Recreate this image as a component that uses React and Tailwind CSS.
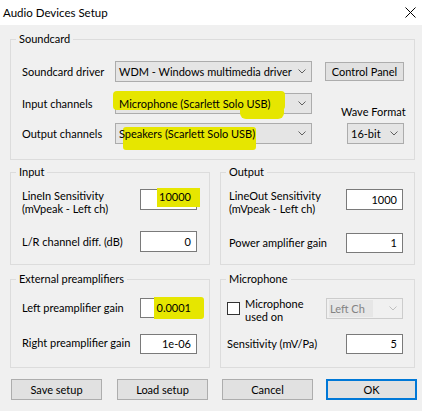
import React from 'react'

const Chevron = ({ color = '#606060' }) => (
  <svg width="8" height="5" viewBox="0 0 8 5" className="shrink-0">
    <path d="M0.5 0.5 L4 4 L7.5 0.5" fill="none" stroke={color} strokeWidth="1" />
  </svg>
)

function Combo({ w, children, disabled }) {
  return (
    <div
      className={`h-[21px] ${w} flex items-center justify-between pl-[3px] pr-[5px] border ${
        disabled ? 'border-[#cccccc] bg-[#f0f0f0] text-[#838383]' : 'border-[#acacac] bg-[#e5e5e5]'
      }`}
    >
      <div className="whitespace-nowrap">{children}</div>
      <Chevron color={disabled ? '#bfbfbf' : '#606060'} />
    </div>
  )
}

function Field({ children, h = 'h-[21px]' }) {
  return (
    <div className={`${h} w-[57px] shrink-0 border border-[#7a7a7a] bg-white flex items-center justify-end pr-[5px]`}>
      {children}
    </div>
  )
}

function Group({ title, className, children }) {
  return (
    <fieldset className={`border border-[#dcdcdc] ${className}`}>
      <legend className="ml-[5px] px-[3px] leading-[16px]">{title}</legend>
      {children}
    </fieldset>
  )
}

function Btn({ children, primary, className = '' }) {
  return (
    <button
      className={`h-[21px] w-[91px] bg-[#e1e1e1] flex items-center justify-center ${
        primary ? 'border-2 border-[#0078d7]' : 'border border-[#adadad]'
      } ${className}`}
    >
      {children}
    </button>
  )
}

export default function App() {
  return (
    <div className="w-[422px] h-[411px] overflow-hidden bg-[#f0f0f0] text-[11px] leading-[16px] text-black font-['Lato',sans-serif]">
      {/* title bar */}
      <div className="h-[25px] bg-white flex items-center justify-between pl-[3px] pr-[6px]">
        <span className="text-[11.5px]">Audio Devices Setup</span>
        <svg width="11" height="11" viewBox="0 0 11 11">
          <path d="M0.5 0.5 L10.5 10.5 M10.5 0.5 L0.5 10.5" stroke="#000" strokeWidth="1" />
        </svg>
      </div>

      <div className="pl-[10px] pt-[6px]">
        <Group title="Soundcard" className="w-[405px] h-[129px]">
          <div className="flex pt-[14px]">
            <div className="flex flex-col pl-[11px]">
              <div className="flex items-center h-[21px]">
                <span className="w-[93px]">Soundcard driver</span>
                <Combo w="w-[197px]">WDM - Windows multimedia driver</Combo>
              </div>
              <div className="flex items-center h-[21px] mt-[11px]">
                <span className="w-[93px]">Input channels</span>
                <Combo w="w-[197px]">
                  <span className="relative block">
                    {/* marker strokes */}
                    <span className="absolute -left-[6px] -top-[5px] w-[172px] h-[19px] bg-[#e6e600] rounded-[4px]" />
                    <span className="absolute left-[121px] top-[8px] w-[44px] h-[15px] bg-[#e6e600] rounded-[6px]" />
                    <span className="relative">Microphone (Scarlett Solo USB)</span>
                  </span>
                </Combo>
              </div>
              <div className="flex items-center h-[21px] mt-[9px]">
                <span className="w-[93px]">Output channels</span>
                <Combo w="w-[197px]">
                  <span className="relative block">
                    <span className="absolute left-[4px] top-[1px] w-[133px] h-[23px] bg-[#e6e600] rounded-[3px]" />
                    <span className="relative">Speakers (Scarlett Solo USB)</span>
                  </span>
                </Combo>
              </div>
            </div>
            <div className="flex flex-col ml-[13px]">
              <button className="mt-[1px] h-[19px] w-[79px] bg-[#e1e1e1] border border-[#adadad] flex items-center justify-center">
                Control Panel
              </button>
              <span className="mt-[23px] ml-[16px] whitespace-nowrap">Wave Format</span>
              <div className="mt-[3px] ml-[22px]">
                <Combo w="w-[57px]">16-bit</Combo>
              </div>
            </div>
          </div>
        </Group>

        <div className="flex mt-[4px]">
          <Group title="Input" className="w-[200px] h-[101px]">
            <div className="pt-[9px] pl-[11px]">
              <div className="flex items-start">
                <span className="w-[118px] leading-[13px]">
                  LineIn Sensitivity
                  <br />
                  (mVpeak - Left ch)
                </span>
                <Field>
                  <span className="bg-[#e6e600] pl-[2px] pr-[9px] -mr-[9px] pt-[1px] pb-[2px] -mt-[4px]">10000</span>
                </Field>
              </div>
              <div className="flex items-center mt-[16px]">
                <span className="w-[118px]">L/R channel diff. (dB)</span>
                <Field>0</Field>
              </div>
            </div>
          </Group>
          <Group title="Output" className="w-[195px] h-[101px] ml-[10px]">
            <div className="pt-[9px] pl-[8px]">
              <div className="flex items-start">
                <span className="w-[117px] leading-[13px]">
                  LineOut Sensitivity
                  <br />
                  (mVpeak - Left ch)
                </span>
                <Field>1000</Field>
              </div>
              <div className="flex items-center mt-[18px]">
                <span className="w-[117px]">Power amplifier gain</span>
                <Field h="h-[20px]">1</Field>
              </div>
            </div>
          </Group>
        </div>

        <div className="flex mt-[6px]">
          <Group title="External preamplifiers" className="w-[200px] h-[97px]">
            <div className="pt-[11px] pl-[11px]">
              <div className="flex items-center">
                <span className="w-[118px]">Left preamplifier gain</span>
                <Field h="h-[20px]">
                  <span className="bg-[#e6e600] pl-[3px] pr-[13px] -mr-[13px] py-[3px] rounded-r-[3px]">0.0001</span>
                </Field>
              </div>
              <div className="flex items-center mt-[16px]">
                <span className="w-[118px] -mt-[3px]">Right preamplifier gain</span>
                <Field h="h-[20px]">1e-06</Field>
              </div>
            </div>
          </Group>
          <Group title="Microphone" className="w-[195px] h-[97px] ml-[10px]">
            <div className="pt-[10px] pl-[6px]">
              <div className="flex items-start">
                <div className="mt-[5px] w-[13px] h-[13px] border border-[#333333] bg-white shrink-0" />
                <span className="ml-[5px] w-[81px] leading-[13px]">
                  Microphone
                  <br />
                  used on
                </span>
                <div className="mt-[1px]">
                  <Combo w="w-[77px]" disabled>
                    <span className="bg-[#e6e6e6] pr-[8px] -ml-[1px] pl-[1px] py-[2px]">Left Ch</span>
                  </Combo>
                </div>
              </div>
              <div className="flex items-center mt-[11px]">
                <span className="w-[119px]">Sensitivity (mV/Pa)</span>
                <Field h="h-[20px]">5</Field>
              </div>
            </div>
          </Group>
        </div>

        <div className="flex mt-[11px] pl-[1px]">
          <Btn>Save setup</Btn>
          <Btn className="ml-[15px]">Load setup</Btn>
          <Btn className="ml-[14px]">Cancel</Btn>
          <Btn primary className="ml-[13px]">OK</Btn>
        </div>
      </div>
    </div>
  )
}
